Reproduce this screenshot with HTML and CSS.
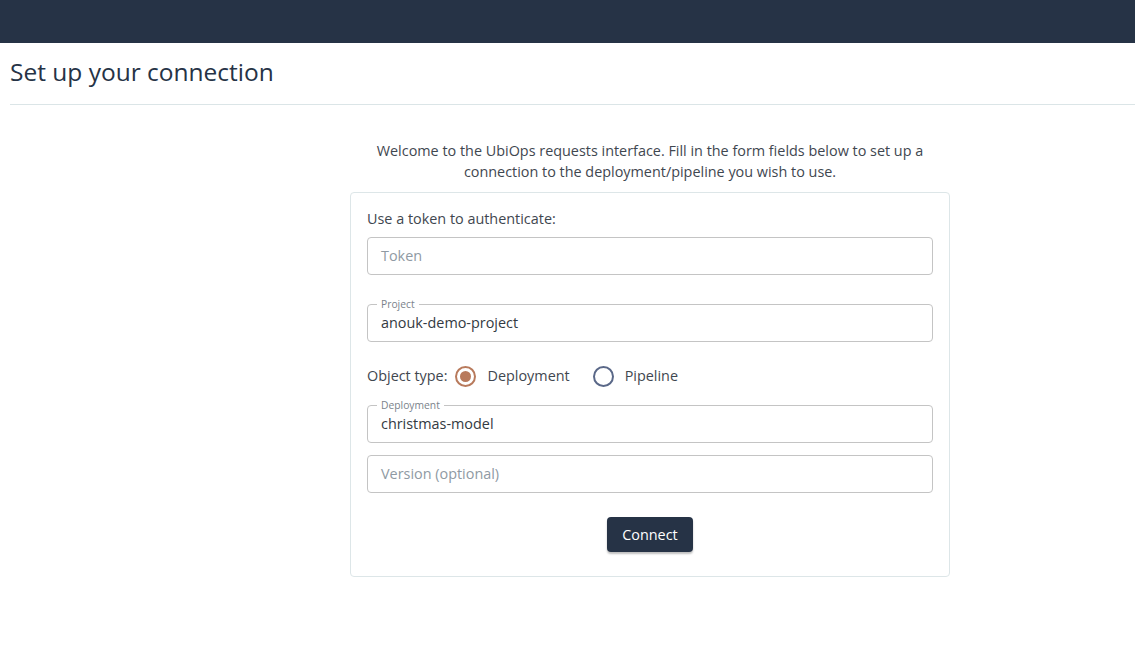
FILE: index.html
```html
<!DOCTYPE html>
<html>
<head>
<meta charset="utf-8">
<link rel="stylesheet" href="styles.css">
</head>
<body>
<div class="topbar"></div>
<div class="page-head">
  <h1 class="title">Set up your connection</h1>
</div>
<main class="main">
  <p class="intro">Welcome to the UbiOps requests interface. Fill in the form fields below to set up a connection to the deployment/pipeline you wish to use.</p>
  <div class="card">
    <div class="label">Use a token to authenticate:</div>
    <div class="field"><span class="placeholder">Token</span></div>
    <div class="field outlined gap-lg"><span class="legend">Project</span><span class="value">anouk-demo-project</span></div>
    <div class="radio-row">
      <span class="radio-label">Object type:</span>
      <span class="radio checked"></span><span class="opt">Deployment</span>
      <span class="radio"></span><span class="opt">Pipeline</span>
    </div>
    <div class="field outlined"><span class="legend">Deployment</span><span class="value">christmas-model</span></div>
    <div class="field gap-sm"><span class="placeholder">Version (optional)</span></div>
    <div class="actions"><button class="btn">Connect</button></div>
  </div>
</main>
</body>
</html>
```
FILE: styles.css
```css
html, body {
  margin: 0;
  padding: 0;
  background: #fff;
  font-family: "Open Sans", "Noto Sans", sans-serif;
  color: #3a4450;
}
.topbar {
  height: 43px;
  background: #263346;
}
.page-head {
  margin-left: 10px;
  border-bottom: 1px solid #dbe5e7;
  height: 61px;
  display: flex;
  align-items: center;
}
.title {
  margin: 0 0 5px 0;
  font-size: 24.5px;
  font-weight: 400;
  color: #263346;
}
.main {
  margin-left: 350px;
  width: 600px;
  padding-top: 35px;
}
.intro {
  margin: 0 0 10px 0;
  text-align: center;
  font-size: 14.4px;
  line-height: 21px;
  color: #3f4750;
  padding: 0 10px;
}
.card {
  border: 1px solid #dde6e8;
  border-radius: 4px;
  padding: 15px 16px 24px 16px;
}
.label {
  font-size: 14.4px;
  line-height: 21px;
  color: #3f4750;
  margin-bottom: 8px;
}
.field {
  position: relative;
  height: 36px;
  border: 1px solid #c4c4c4;
  border-radius: 4px;
  display: flex;
  align-items: center;
  padding-left: 13px;
  font-size: 14.4px;
}
.field > span:not(.legend) { margin-top: -2px; }
.gap-lg { margin-top: 29px; }
.gap-sm { margin-top: 12px; }
.placeholder { color: #8f9aa3; }
.value { color: #333a42; }
.legend {
  position: absolute;
  top: -8px;
  left: 9px;
  padding: 0 4px;
  background: #fff;
  font-size: 10.3px;
  line-height: 14px;
  color: #7b838b;
}
.radio-row {
  display: flex;
  align-items: center;
  height: 24px;
  margin: 22px 0 17px 0;
  font-size: 14.4px;
  color: #3f4750;
}
.radio-row > span { margin-top: -2px; }
.radio-row > .radio { margin-top: 0; }
.radio-label { margin-right: 8px; }
.radio {
  box-sizing: border-box;
  width: 21px;
  height: 21px;
  border-radius: 50%;
  border: 2px solid #5a6888;
  margin-right: 11px;
  position: relative;
}
.radio.checked { border-color: #b87a5c; }
.radio.checked::after {
  content: "";
  position: absolute;
  left: 3px;
  top: 3px;
  width: 11px;
  height: 11px;
  border-radius: 50%;
  background: #b87a5c;
}
.opt { margin-right: 23px; }
.actions {
  display: flex;
  justify-content: center;
  margin-top: 24px;
}
.btn {
  font-family: "Open Sans", "Noto Sans", sans-serif;
  font-size: 14.4px;
  color: #fff;
  background: #263346;
  border: none;
  border-radius: 4px;
  width: 86px;
  height: 35px;
  box-shadow: 0 2px 2px rgba(0,0,0,0.25);
  cursor: pointer;
}
```
